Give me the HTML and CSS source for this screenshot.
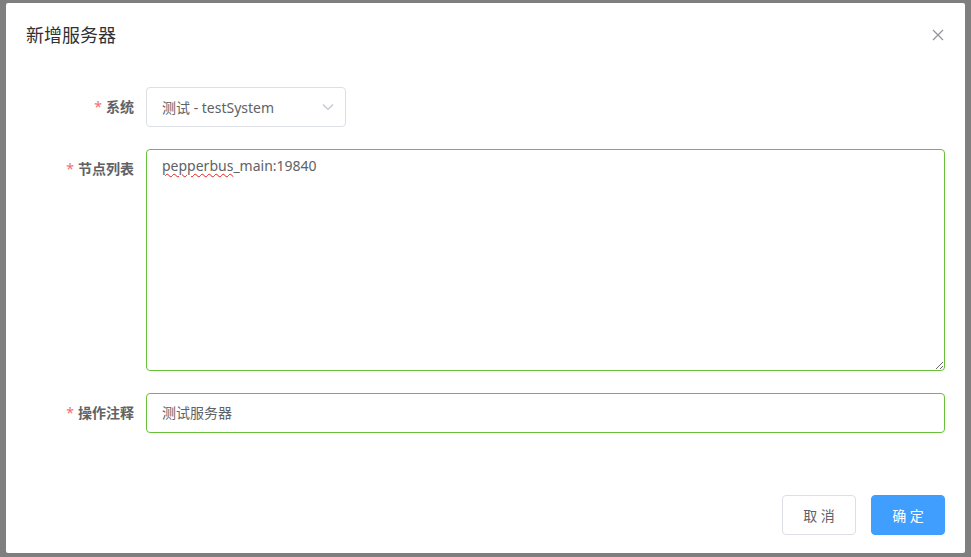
FILE: index.html
```html
<!DOCTYPE html>
<html lang="zh">
<head>
<meta charset="utf-8">
<title>新增服务器</title>
<link rel="stylesheet" href="styles.css">
</head>
<body>
<div class="overlay">
  <div class="dialog">
    <div class="dialog-header">
      <span class="dialog-title">新增服务器</span>
      <button class="dialog-close" aria-label="关闭">
        <svg width="12" height="12" viewBox="0 0 12 12"><path d="M1 1 L11 11 M11 1 L1 11" stroke="#909399" stroke-width="1.2" fill="none"/></svg>
      </button>
    </div>
    <div class="dialog-body">
      <div class="form-item">
        <label class="form-label"><span class="req">*</span>系统</label>
        <div class="form-content">
          <div class="select">
            <span class="select-value">测试 - testSystem</span>
            <svg class="select-arrow" width="12" height="8" viewBox="0 0 12 8"><path d="M1 1.5 L6 6.5 L11 1.5" stroke="#c0c4cc" stroke-width="1.2" fill="none"/></svg>
          </div>
        </div>
      </div>
      <div class="form-item">
        <label class="form-label"><span class="req">*</span>节点列表</label>
        <div class="form-content">
          <div class="textarea"><span class="spell">pepperbus</span>_main:19840</div>
        </div>
      </div>
      <div class="form-item">
        <label class="form-label"><span class="req">*</span>操作注释</label>
        <div class="form-content">
          <div class="input valid">测试服务器</div>
        </div>
      </div>
    </div>
    <div class="dialog-footer">
      <button class="btn">取 消</button>
      <button class="btn btn-primary">确 定</button>
    </div>
  </div>
</div>
</body>
</html>
```
FILE: styles.css
```css
* { box-sizing: border-box; }
html, body { margin: 0; padding: 0; }
body {
  width: 971px;
  height: 557px;
  overflow: hidden;
  font-family: "Noto Sans", "Noto Sans CJK SC", sans-serif;
  font-size: 14px;
  color: #606266;
}
.overlay {
  width: 971px;
  height: 557px;
  background: #7f7f7f;
  padding: 3px 6px 0 6px;
}
.dialog {
  width: 959px;
  background: #fff;
  border-radius: 2px;
  display: flex;
  flex-direction: column;
}
.dialog-header {
  padding: 20px 20px 10px;
  display: flex;
  align-items: center;
  justify-content: space-between;
}
.dialog-title {
  font-size: 18px;
  line-height: 24px;
  color: #303133;
}
.dialog-close {
  border: 0;
  background: none;
  padding: 0;
  margin-right: 1px;
  display: flex;
  cursor: pointer;
}
.dialog-body {
  padding: 30px 20px 8px;
}
.form-item {
  display: flex;
  margin-bottom: 22px;
}
.form-label {
  width: 120px;
  padding-right: 12px;
  text-align: right;
  line-height: 40px;
  font-weight: 700;
  color: #606266;
  flex-shrink: 0;
}
.req {
  color: #f56c6c;
  margin-right: 4px;
  font-weight: 400;
}
.form-content {
  flex: 1;
}
.select {
  width: 200px;
  height: 40px;
  border: 1px solid #dcdfe6;
  border-radius: 4px;
  padding: 0 15px;
  display: flex;
  align-items: center;
  justify-content: space-between;
}
.select-arrow { margin-right: -4px; }
.textarea {
  height: 222px;
  border: 1px solid #67c23a;
  border-radius: 4px;
  padding: 5px 15px;
  line-height: 21px;
  resize: vertical;
  overflow: auto;
}
.spell {
  text-decoration: underline wavy #e02020;
  text-decoration-thickness: 1px;
  text-underline-offset: 2px;
}
.input {
  height: 40px;
  line-height: 38px;
  border: 1px solid #dcdfe6;
  border-radius: 4px;
  padding: 0 15px;
}
.input.valid { border-color: #67c23a; }
.dialog-footer {
  padding: 32px 20px 18px;
  display: flex;
  justify-content: flex-end;
  gap: 15px;
}
.btn {
  height: 40px;
  padding: 0;
  border: 1px solid #dcdfe6;
  border-radius: 4px;
  background: #fff;
  color: #606266;
  font-family: inherit;
  font-size: 14px;
  cursor: pointer;
  width: 74px;
}
.btn-primary {
  background: #409eff;
  border-color: #409eff;
  color: #fff;
}
```
